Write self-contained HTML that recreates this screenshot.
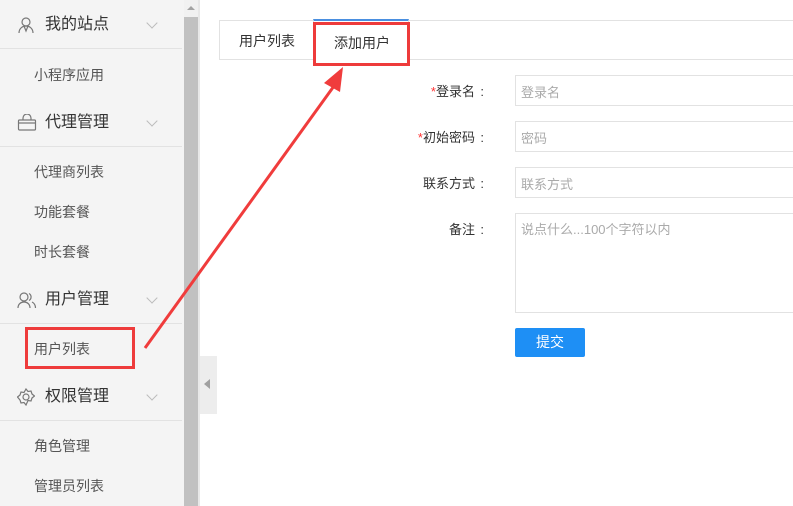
<!DOCTYPE html>
<html><head><meta charset="utf-8"><style>
*{margin:0;padding:0;box-sizing:border-box}
body{width:793px;height:506px;overflow:hidden;background:#fff;font-family:"Liberation Sans","Noto Sans CJK SC",sans-serif;position:relative;color:#333}
.side{position:absolute;left:0;top:0;width:184px;height:506px;background:#f4f4f4}
.sb{position:absolute;left:184px;top:0;width:14px;height:506px;background:#f1f1f1}
.sb .th{position:absolute;left:0;top:17px;width:14px;height:489px;background:#c1c1c1}
.sb .up{position:absolute;left:3px;top:6px;border:4px solid transparent;border-bottom:4px solid #a3a3a3;border-top:0}
.div{position:absolute;left:198px;top:0;width:2px;height:506px;background:#e8e8e8}
.h{position:absolute;left:0;width:182px;height:48px;font-size:16px;color:#333;line-height:48px;padding-left:45px}
.h.b{border-bottom:1px solid #e2e2e2}
.h .ch{position:absolute;left:148px;top:18px;width:8px;height:8px;border-right:1px solid #bbb;border-bottom:1px solid #bbb;transform:rotate(45deg)}
.h svg{position:absolute;left:17px;top:15px}
.it{position:absolute;left:34px;font-size:14px;color:#555}
.in{position:absolute;left:515px;width:290px;height:31px;border:1px solid #e2e2e2;font-size:13px;color:#aaa;padding:5px 5px}
.lb{position:absolute;right:309px;font-size:13px;color:#333}
.lb i{color:#f33;font-style:normal}
.lb b{font-weight:normal;display:inline-block;width:9px;text-align:right}
</style></head><body>
<div class="side">
<div class="h b" style="top:1px">我的站点<span class="ch"></span><svg width="18" height="18" viewBox="0 0 18 18" fill="none" stroke="#777" stroke-width="1.2"><circle cx="9" cy="6" r="4"/><path d="M2 17c0-4 3-7 7-7s7 3 7 7M7 10l2 5 2-5"/></svg></div>
<div class="it" style="top:65px">小程序应用</div>
<div class="h b" style="top:99px">代理管理<span class="ch"></span><svg width="20" height="18" viewBox="0 0 20 18" fill="none" stroke="#777" stroke-width="1.2"><rect x="1.5" y="6" width="17" height="10" rx="1"/><path d="M6 6V4a4 4 0 018 0v2M2 9h16"/></svg></div>
<div class="it" style="top:162px">代理商列表</div>
<div class="it" style="top:202px">功能套餐</div>
<div class="it" style="top:242px">时长套餐</div>
<div class="h b" style="top:276px">用户管理<span class="ch"></span><svg width="20" height="18" viewBox="0 0 20 18" fill="none" stroke="#777" stroke-width="1.2"><circle cx="7" cy="6" r="4"/><path d="M1 17c0-4 3-6 6-6s6 2 6 6M12 2.5a4 4 0 010 7M15 11c2 1 3.5 3 3.5 6"/></svg></div>
<div class="it" style="top:339px">用户列表</div>
<div class="h b" style="top:373px">权限管理<span class="ch"></span><svg width="18" height="18" viewBox="0 0 18 18" fill="none" stroke="#777" stroke-width="1.2"><path d="M9 1l2 2.5 3-.5 1 3 2.5 2-2.5 2-1 3-3-.5L9 17l-2-2.5-3 .5-1-3L.5 9 3 7l1-3 3 .5z"/><circle cx="9" cy="9" r="3"/></svg></div>
<div class="it" style="top:436px">角色管理</div>
<div class="it" style="top:476px">管理员列表</div>
</div>
<div class="sb"><div class="up"></div><div class="th"></div></div>
<div class="div"></div>
<div style="position:absolute;left:200px;top:356px;width:17px;height:58px;background:#ededed"></div>
<div style="position:absolute;left:204px;top:379px;border:5px solid transparent;border-right:6px solid #a0a0a0;border-left:0"></div>

<div style="position:absolute;left:219px;top:20px;width:600px;height:40px;border:1px solid #e2e2e2"></div>
<div style="position:absolute;left:313px;top:19px;width:96px;height:42px;background:#fff;border-top:2px solid #4a8fe0;border-right:1px solid #e2e2e2;border-left:1px solid #e2e2e2"></div>
<div style="position:absolute;left:239px;top:31px;font-size:14px;color:#333">用户列表</div>
<div style="position:absolute;left:334px;top:33px;font-size:14px;color:#333">添加用户</div>

<div class="lb" style="top:81px"><i>*</i>登录名<b>:</b></div>
<div class="lb" style="top:127px"><i>*</i>初始密码<b>:</b></div>
<div class="lb" style="top:173px">联系方式<b>:</b></div>
<div class="lb" style="top:219px">备注<b>:</b></div>
<div class="in" style="top:75px;padding-top:6px">登录名</div>
<div class="in" style="top:121px;padding-top:6px">密码</div>
<div class="in" style="top:167px;padding-top:6px">联系方式</div>
<div class="in" style="top:213px;height:100px;padding-top:5px">说点什么...100个字符以内</div>
<div style="position:absolute;left:515px;top:328px;width:70px;height:29px;background:#1e8ff5;border-radius:2px;color:#fff;font-size:14px;text-align:center;line-height:29px">提交</div>

<div style="position:absolute;left:313px;top:22px;width:97px;height:44px;border:3px solid #ee3b3b"></div>
<div style="position:absolute;left:25px;top:327px;width:110px;height:42px;border:3px solid #ee3b3b"></div>
<svg style="position:absolute;left:0;top:0" width="793" height="506"><path d="M145 348L334 86" stroke="#f03c3c" stroke-width="3"/><path d="M343 67L324 83L340 92Z" fill="#f03c3c"/></svg>
</body></html>
